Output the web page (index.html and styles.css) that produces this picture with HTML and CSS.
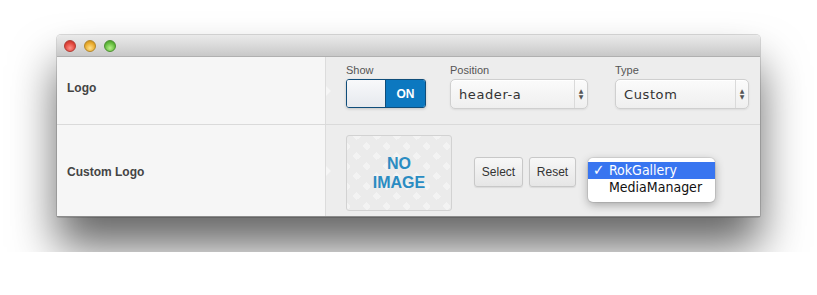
FILE: index.html
```html
<!DOCTYPE html>
<html lang="en">
<head>
  <meta charset="UTF-8" />
  <title>Logo Settings</title>
  <link rel="stylesheet" href="styles.css">
</head>
<body>
  <div class="window">
    <div class="titlebar">
      <span class="light red"></span>
      <span class="light yellow"></span>
      <span class="light green"></span>
    </div>

    <div class="row row-logo">
      <div class="row-label">Logo</div>
      <div class="row-body">
        <div class="field">
          <label>Show</label>
          <div class="toggle">
            <span class="knob"></span>
            <span class="on">ON</span>
          </div>
        </div>
        <div class="field field-position">
          <label>Position</label>
          <div class="select select-position">
            <span class="value">header-a</span>
            <span class="arrows">&#9650;<br>&#9660;</span>
          </div>
        </div>
        <div class="field">
          <label>Type</label>
          <div class="select select-type">
            <span class="value">Custom</span>
            <span class="arrows">&#9650;<br>&#9660;</span>
          </div>
        </div>
      </div>
    </div>

    <div class="row row-custom">
      <div class="row-label">Custom Logo</div>
      <div class="row-body">
        <div class="no-image">NO<br>IMAGE</div>
        <div class="buttons">
          <button class="btn btn-select">Select</button>
          <button class="btn btn-reset">Reset</button>
        </div>
        <ul class="menu">
          <li class="picked"><span class="check">&#10003;</span>RokGallery</li>
          <li>MediaManager</li>
        </ul>
      </div>
    </div>
  </div>
</body>
</html>
```

FILE: styles.css
```css
body {
  margin: 0;
  padding: 35px 57px;
  background: #fff;
  font-family: "Liberation Sans", Arial, sans-serif;
}
.window {
  width: 703px;
  border-radius: 4px 4px 2px 2px;
  box-shadow: 0 30px 45px rgba(0,0,0,0.6), 0 0 0 1px rgba(0,0,0,0.14);
}
.titlebar {
  height: 22px;
  display: flex;
  align-items: center;
  gap: 8px;
  padding-left: 7px;
  border-radius: 4px 4px 0 0;
  background: linear-gradient(#eaeaea, #d8d8d8 55%, #c8c8c8);
  border-bottom: 1px solid #b0b0b0;
  box-sizing: border-box;
}
.light {
  width: 12px;
  height: 12px;
  border-radius: 50%;
  box-sizing: border-box;
}
.red {
  background: radial-gradient(circle at 50% 70%, #ff8e86, #e0443a 60%, #b52c24);
  border: 1px solid #b03a33;
}
.yellow {
  background: radial-gradient(circle at 50% 70%, #ffe08a, #e8a92a 60%, #b6801a);
  border: 1px solid #b3872b;
}
.green {
  background: radial-gradient(circle at 50% 70%, #b6f08a, #62bb3c 60%, #3d8a24);
  border: 1px solid #4c8f31;
}
.row {
  display: grid;
  grid-template-columns: 269px 1fr;
}
.row-logo {
  height: 67px;
  border-bottom: 1px solid #dadada;
}
.row-custom {
  height: 91px;
  border-bottom: 1px solid #8c8c8c;
}
.row-label {
  position: relative;
  background: #f6f6f6;
  border-right: 1px solid #dcdcdc;
  padding-left: 10px;
  display: flex;
  align-items: center;
  font-size: 12px;
  font-weight: bold;
  color: #444;
}
.row-label::after {
  content: "";
  position: absolute;
  right: -6px;
  top: 50%;
  margin-top: -5px;
  border-left: 5px solid #f6f6f6;
  border-top: 5px solid transparent;
  border-bottom: 5px solid transparent;
}
.row-logo .row-label { padding-bottom: 6px; }
.row-custom .row-label { padding-top: 3px; }
.row-body {
  background: #ededed;
  display: flex;
  padding-left: 20px;
}
.row-logo .row-body {
  padding-top: 7px;
  gap: 24px;
}
.field label {
  display: block;
  font-size: 11px;
  color: #555;
  height: 15px;
}
.field-position { margin-right: 3px; }
.toggle {
  display: flex;
  width: 80px;
  height: 29px;
  box-sizing: border-box;
  border: 1px solid #0f4d7a;
  border-radius: 3px;
  overflow: hidden;
  box-shadow: 0 1px 3px rgba(0,0,0,0.18);
}
.knob {
  width: 38px;
  background: linear-gradient(#f8f9fb, #e6e9ee);
  border-right: 1px solid #0f4d7a;
}
.on {
  flex: 1;
  background: #0c78c0;
  color: #fff;
  font-weight: bold;
  font-size: 12px;
  display: flex;
  align-items: center;
  justify-content: center;
}
.select {
  display: flex;
  height: 30px;
  box-sizing: border-box;
  border: 1px solid #cfcfcf;
  border-radius: 5px;
  background: linear-gradient(#fbfbfb, #efefef);
  box-shadow: inset 0 1px 1px #fff, 0 1px 2px rgba(0,0,0,0.08);
  font-family: "DejaVu Sans", sans-serif;
  font-size: 13px;
  color: #333;
}
.select-position { width: 138px; }
.select-type { width: 134px; }
.value {
  flex: 1;
  display: flex;
  align-items: center;
  padding-left: 8px;
  letter-spacing: 0.6px;
}
.arrows {
  width: 13px;
  border-left: 1px solid #dadada;
  font-size: 6px;
  line-height: 6px;
  color: #555;
  text-align: center;
  padding-top: 8px;
  box-sizing: border-box;
}
.row-custom .row-body {
  padding-top: 10px;
  align-items: flex-start;
}
.no-image {
  width: 106px;
  height: 76px;
  box-sizing: border-box;
  border: 1px solid #d2d2d2;
  border-radius: 3px;
  background-color: #f3f3f3;
  background-image:
    linear-gradient(45deg, transparent 35%, #ebebeb 35%, #ebebeb 65%, transparent 65%),
    linear-gradient(-45deg, transparent 35%, #ebebeb 35%, #ebebeb 65%, transparent 65%);
  background-size: 20px 20px;
  color: #2a8cc2;
  font-weight: bold;
  font-size: 16px;
  line-height: 19px;
  text-align: center;
  padding-top: 18px;
}
.buttons {
  display: flex;
  gap: 6px;
  margin: 22px 0 0 22px;
}
.btn {
  height: 30px;
  padding: 0;
  border: 1px solid #c8c8c8;
  border-radius: 3px;
  background: linear-gradient(#f7f7f7, #e6e6e6);
  font-family: "Liberation Sans", Arial, sans-serif;
  font-size: 12px;
  color: #333;
  box-shadow: 0 1px 1px rgba(0,0,0,0.08);
}
.btn-select { width: 49px; }
.btn-reset { width: 47px; }
.menu {
  list-style: none;
  margin: 23px 0 0 12px;
  padding: 4px 0 6px;
  width: 127px;
  background: #fff;
  border-radius: 5px;
  box-shadow: 0 3px 10px rgba(0,0,0,0.3), 0 0 0 1px rgba(0,0,0,0.08);
  font-family: "DejaVu Sans Condensed", "DejaVu Sans", sans-serif;
  font-size: 14px;
  color: #111;
}
.menu li {
  height: 17px;
  line-height: 17px;
  padding-left: 21px;
  position: relative;
}
.menu .picked {
  background: #3875f0;
  color: #fff;
}
.check {
  position: absolute;
  left: 5px;
  font-size: 15px;
  font-weight: bold;
}
```
